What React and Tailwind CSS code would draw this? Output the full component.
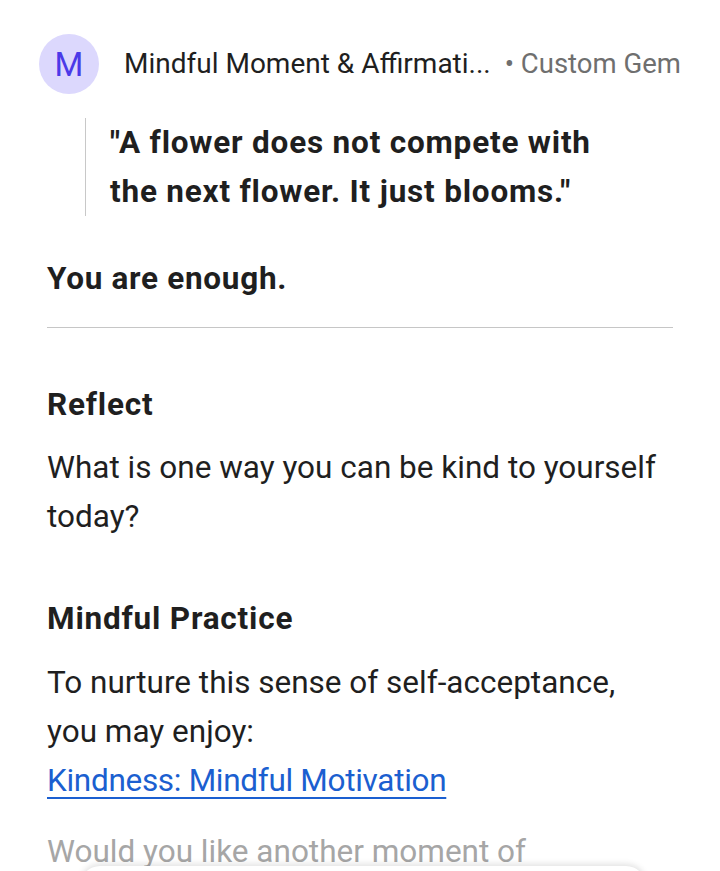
export default function App() {
  return (
    <div className="relative w-[720px] h-[871px] overflow-hidden bg-white text-[#1f1f1f]" style={{ fontFamily: 'Roboto, "Noto Sans", sans-serif' }}>
      <div className="pt-[34px] pl-[39px] pr-[12px]">
        <div className="flex items-center h-[60px]">
          <div className="w-[60px] h-[60px] rounded-full bg-[#dcd8fd] flex items-center justify-center text-[#4b3ae8] text-[33px] leading-none">M</div>
          <div className="ml-[25px] flex items-center leading-none whitespace-nowrap">
            <span className="text-[#1f1f1f] text-[28px]">Mindful Moment &amp; Affirmati...</span>
            <span className="text-[#6f6f6f] text-[27.5px] ml-[14px]">• Custom Gem</span>
          </div>
        </div>
      </div>
      <div className="pl-[47px] pr-[20px]">
        <div className="mt-[24px] ml-[38px] border-l border-[#c8c8c8] pl-[24px] text-[31.5px] tracking-[0.8px] leading-[49px] font-bold whitespace-nowrap">
          <p>"A flower does not compete with</p>
          <p>the next flower. It just blooms."</p>
        </div>
        <p className="mt-[38px] text-[31.5px] tracking-[0.7px] leading-[49px] font-bold">You are enough.</p>
        <hr className="mt-[24px] w-[626px] border-0 border-t border-[#c6c6c6]" />
        <p className="mt-[52px] text-[31.5px] tracking-[0.8px] leading-[49px] font-bold">Reflect</p>
        <p className="mt-[14px] text-[31.5px] leading-[49px] whitespace-nowrap">What is one way you can be kind to yourself<br />today?</p>
        <p className="mt-[53px] text-[31.5px] tracking-[0.8px] leading-[49px] font-bold">Mindful Practice</p>
        <p className="mt-[15px] text-[31.5px] leading-[49px] whitespace-nowrap">To nurture this sense of self-acceptance,<br />you may enjoy:</p>
        <p className="text-[31.5px] leading-[49px]"><a className="text-[#1b5fd0] underline underline-offset-[6px] decoration-[2px] tracking-[-0.3px]">Kindness: Mindful Motivation</a></p>
        <p className="mt-[22px] text-[31.5px] leading-[49px] text-[#a6a6a6] whitespace-nowrap">Would you like another moment of</p>
      </div>
      <div className="absolute left-[80px] w-[566px] top-[866px] h-[40px] rounded-t-[20px] bg-white shadow-[0_-2px_6px_rgba(0,0,0,0.12)]"></div>
    </div>
  );
}
